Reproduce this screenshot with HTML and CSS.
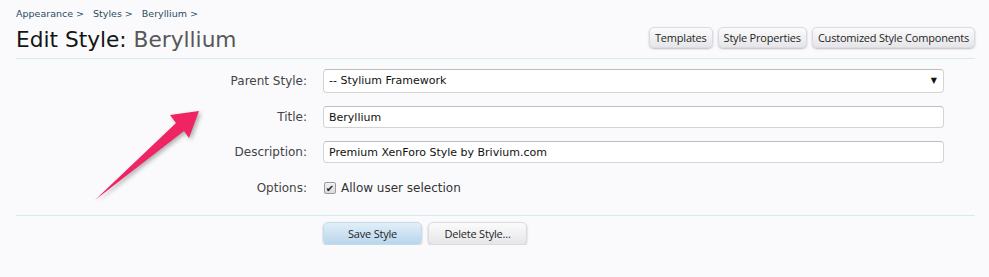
FILE: index.html
```html
<!DOCTYPE html>
<html lang="en">
<head>
    <meta charset="UTF-8">
    <title>Edit Style: Beryllium</title>
    <link rel="stylesheet" href="styles.css">
</head>
<body>
    <div class="page">
        <div class="title-bar">
            <div class="title-left">
                <nav class="breadcrumb">
                    <a href="#">Appearance &gt;</a>
                    <a href="#">Styles &gt;</a>
                    <a href="#">Beryllium &gt;</a>
                </nav>
                <h1 class="page-title">Edit Style: <em>Beryllium</em></h1>
            </div>
            <div class="top-ctrls">
                <a class="button" href="#">Templates</a>
                <a class="button" href="#">Style Properties</a>
                <a class="button" href="#">Customized Style Components</a>
            </div>
        </div>

        <form class="style-form">
            <label class="ctrl-label first">Parent Style:</label>
            <div class="ctrl">
                <div class="select-box">-- Stylium Framework</div>
            </div>

            <label class="ctrl-label">Title:</label>
            <div class="ctrl">
                <input class="text-box" type="text" value="Beryllium">
            </div>

            <label class="ctrl-label">Description:</label>
            <div class="ctrl">
                <input class="text-box" type="text" value="Premium XenForo Style by Brivium.com">
            </div>

            <label class="ctrl-label options-label">Options:</label>
            <div class="ctrl options">
                <label class="check"><span class="check-box">&#10004;</span> Allow user selection</label>
            </div>
        </form>

        <div class="submit-unit">
            <button class="button primary" type="button">Save Style</button>
            <button class="button" type="button">Delete Style...</button>
        </div>

        <!-- annotation arrow drawn over the page -->
        <svg class="arrow" width="140" height="120" viewBox="80 95 140 120">
            <polygon points="95,200 176,123 170,115 199,111 189,138 184,131" fill="#ef2462"/>
        </svg>
    </div>
</body>
</html>
```

FILE: styles.css
```css
* {
    box-sizing: border-box;
}

body {
    margin: 0;
    background-color: #fafafd;
    font-family: 'DejaVu Sans', Tahoma, sans-serif;
    color: #1a1a1a;
}

.page {
    position: relative;
    padding: 8px 14px 0 16px;
}

.title-bar {
    display: flex;
    justify-content: space-between;
    align-items: flex-end;
    padding-bottom: 4px;
    border-bottom: 1px solid #d3eaee;
}

.breadcrumb {
    display: flex;
    gap: 9px;
    font-size: 9.5px;
    line-height: 12px;
}

.breadcrumb a {
    color: #2d4b61;
    text-decoration: none;
}

.page-title {
    margin: 6px 0 0;
    font-size: 21.7px;
    font-weight: normal;
    line-height: 28px;
    color: #151515;
}

.page-title em {
    font-style: normal;
    color: #585858;
}

.top-ctrls {
    display: flex;
    gap: 5px;
    margin-bottom: 6px;
}

.button {
    display: inline-block;
    height: 22px;
    padding: 0 5px;
    font-family: 'Open Sans', sans-serif;
    font-size: 11px;
    line-height: 20px;
    letter-spacing: -0.2px;
    color: #1f1f1f;
    text-decoration: none;
    background: linear-gradient(#fbfbfb, #e6e6ea);
    border: 1px solid #dcdce0;
    border-radius: 5px;
    box-shadow: 0 1px 2px rgba(0, 0, 0, 0.25);
    cursor: pointer;
}

.top-ctrls .button {
    height: 21px;
    line-height: 19px;
}

.style-form {
    display: grid;
    grid-template-columns: 291px 1fr;
    column-gap: 16px;
    row-gap: 13px;
    padding: 10px 31px 16px 0;
    border-bottom: 1px solid #d3eaee;
}

.ctrl-label {
    text-align: right;
    font-size: 12px;
    line-height: 22px;
    color: #444;
}

.ctrl-label.first {
    line-height: 24px;
}

.select-box,
.text-box {
    display: block;
    width: 100%;
    height: 22px;
    margin: 0;
    padding: 0 5px;
    font-family: 'DejaVu Sans', Tahoma, sans-serif;
    font-size: 11px;
    line-height: 20px;
    color: #111;
    background: #fff;
    border: 1px solid #d4d4d4;
    border-top-color: #bdbdbd;
    border-radius: 4px;
}

.select-box {
    position: relative;
    height: 24px;
    line-height: 22px;
}

.select-box::after {
    content: "\25BC";
    position: absolute;
    right: 6px;
    top: 0;
    font-size: 8px;
    color: #111;
}

.options-label,
.options {
    padding-top: 1px;
}

.check {
    display: flex;
    align-items: center;
    gap: 5px;
    font-size: 12px;
    line-height: 22px;
    color: #333;
}

.check-box {
    width: 12px;
    height: 12px;
    margin-left: 1px;
    font-size: 10px;
    line-height: 11px;
    text-align: center;
    color: #222;
    background: linear-gradient(#f2f2f2, #dcdcdc);
    border: 1px solid #9a9a9a;
    border-radius: 2px;
}

.submit-unit {
    display: flex;
    gap: 6px;
    padding: 6px 0 0 307px;
}

.submit-unit .button {
    width: 99px;
    height: 23px;
    padding: 0;
}

.button.primary {
    background: linear-gradient(#e1eef8, #b9d6ee);
    border-color: #c6dbea;
}

.arrow {
    position: absolute;
    left: 80px;
    top: 95px;
    filter: drop-shadow(2px 2px 2px rgba(0, 0, 0, 0.3));
}
```
